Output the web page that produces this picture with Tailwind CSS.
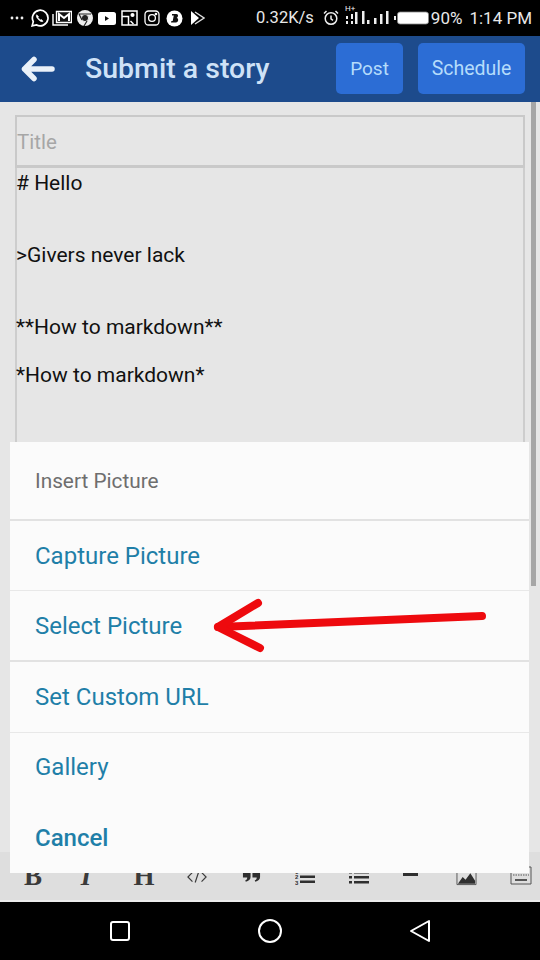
<!DOCTYPE html>
<html lang="en">
<head>
  <meta charset="UTF-8" />
  <title>Submit a story</title>
  <meta name="viewport" content="width=device-width, initial-scale=1.0" />
  <script src="https://cdn.jsdelivr.net/npm/@tailwindcss/browser@4"></script>
</head>
<body class="bg-black font-['Roboto',sans-serif]">
  <div class="relative w-[540px] h-[960px] overflow-hidden flex flex-col">

    <!-- status bar -->
    <div class="h-[36px] bg-black text-[#e8e8e8] flex items-center pl-[9px] shrink-0">
      <div class="flex items-center shrink-0">
        <svg width="16" height="6" viewBox="0 0 16 6"><g fill="#eee"><circle cx="3" cy="3" r="1.4"/><circle cx="8" cy="3" r="1.4"/><circle cx="13" cy="3" r="1.4"/></g></svg>
        <svg width="19" height="19" viewBox="0 0 18 18" fill="none" stroke="#fff" stroke-width="1.6" class="ml-[5px]"><path d="M2 16l1.100-4A7.400 7.400 0 1 1 6 15z"/><path d="M6.300 5.500c-.8 1 0 3 1.700 4.600s3.400 2.400 4.400 1.500l-1.500-1.600-1 .5-2.300-2.300.5-1z" fill="#fff" stroke-width=".6"/></svg>
        <svg width="20" height="18" viewBox="0 0 20 18" fill="none" stroke="#fff" stroke-width="1.400" class="ml-[3px]"><path d="M4.500 2.500h15v11h-15z" fill="#111"/><path d="M1 5v11h15"/><path d="M7 12V5l5 4 5-4v7" stroke-width="2"/></svg>
        <svg width="18" height="18" viewBox="0 0 18 18" class="ml-[4px]"><circle cx="9" cy="9" r="8" fill="#eee"/><circle cx="9" cy="9" r="3.600" fill="#222" stroke="#eee" stroke-width="1"/><path d="M3 5h12M11 12l-3 5M6 11L3 5" stroke="#222" stroke-width="1.200" fill="none"/></svg>
        <svg width="18" height="14" viewBox="0 0 18 14" class="ml-[4px]"><rect width="18" height="13" y="1" rx="2.500" fill="#fff"/><path d="M7 5l4 2.500L7 10z" fill="#111"/></svg>
        <svg width="17" height="16" viewBox="0 0 17 16" fill="none" stroke="#fff" stroke-width="1.500" class="ml-[5px]"><path d="M1 1h15v14H1z"/><path d="M1 6.500h6.500V15"/><circle cx="11.500" cy="5" r="1.300" fill="#fff"/><path d="M9.500 11l3 3"/></svg>
        <svg width="16" height="16" viewBox="0 0 16 16" fill="none" stroke="#fff" stroke-width="1.300" class="ml-[6px]"><rect x="1" y="1" width="14" height="14" rx="3.500"/><circle cx="8" cy="8" r="3.400"/><circle cx="12" cy="4" r=".7" fill="#fff"/></svg>
        <svg width="17" height="17" viewBox="0 0 17 17" class="ml-[6px]"><circle cx="8.500" cy="8.500" r="8" fill="#fff"/><path d="M6 4h4.500c2 0 2 3 .2 3.800 2.300.7 1.800 4.700-.7 4.700H5l.4-1.500H6.700L7.800 5.500H6z" fill="#111"/></svg>
        <svg width="15" height="16" viewBox="0 0 15 16" class="ml-[7px]"><path d="M1 1l8 7-8 7z" fill="#fff"/><path d="M5 2l9 6-9 6" fill="none" stroke="#ddd" stroke-width="1.400"/></svg>
      </div>
      <span class="ml-[51px] text-[16.500px] leading-none whitespace-nowrap shrink-0">0.32K/s</span>
      <svg width="16" height="16" viewBox="0 0 16 16" fill="none" stroke="#eee" stroke-width="1.500" class="ml-[9px] shrink-0"><circle cx="8" cy="8.500" r="5.800"/><path d="M8 5.500v3.300l2 1.500M1 3.500L3.500 1M15 3.500L12.500 1"/></svg>
      <svg width="44" height="22" viewBox="0 0 44 22" class="ml-[6px] -mt-[4px] shrink-0" fill="#eee"><text x="0" y="6" font-size="8" font-family="Roboto" fill="#eee">H+</text><rect x="1" y="16" width="2" height="3"/><rect x="1" y="11" width="2" height="3"/><rect x="6" y="16" width="2" height="3"/><rect x="6" y="9" width="2" height="5"/><rect x="10" y="7" width="2.500" height="12"/><rect x="17" y="6" width="2.500" height="13"/><rect x="22" y="15" width="2.500" height="4"/><rect x="29" y="13" width="2.500" height="6"/><rect x="35" y="9" width="2.500" height="10"/><rect x="41" y="6" width="2.500" height="13"/></svg>
      <svg width="35" height="14" viewBox="0 0 35 14" class="ml-[5px] shrink-0"><rect x="0" y="5" width="2" height="4" fill="#eee"/><rect x="3.500" y="1" width="31" height="12" rx="2.500" fill="#fff" stroke="#888" stroke-width=".8"/></svg>
      <span class="ml-[2px] text-[17px] leading-none whitespace-nowrap shrink-0">90%</span>
      <span class="ml-[7px] text-[17px] leading-none whitespace-nowrap shrink-0">1:14 PM</span>
    </div>

    <!-- header -->
    <div class="h-[66px] bg-[#1d4b8c] flex items-center shrink-0 pl-[21px] pr-[15px]">
      <svg width="34" height="26" viewBox="0 0 34 26" fill="none" stroke="#eaf1f9" stroke-width="5.500" stroke-linecap="round" stroke-linejoin="round"><path d="M3.500 13h27.500M13 3.500L3.500 13l9.500 9.500"/></svg>
      <h1 class="ml-[30px] text-[28.500px] font-medium text-[#cfe2f7] leading-none">Submit a story</h1>
      <button class="ml-auto w-[67px] h-[51px] rounded-[5px] bg-[#2c6dd5] text-[#b5dcfb] text-[19px] -mt-[2px] pt-[2px]">Post</button>
      <button class="ml-[15px] w-[107px] h-[51px] rounded-[5px] bg-[#2c6dd5] text-[#b5dcfb] text-[19.500px] -mt-[2px] pt-[2px]">Schedule</button>
    </div>

    <!-- editor -->
    <div class="flex-1 bg-[#e6e6e6] flex flex-col min-h-0 pl-[15px] pt-[13px]">
      <div class="h-[53px] border-2 border-b-[3px] border-[#c9c9c9] flex items-center pt-[2px] text-[20.500px] text-[#a6a6a6] shrink-0 w-[510px]">Title</div>
      <div class="flex-1 border-x-2 border-[#cdcdcd] text-[21px] text-[#111] leading-[24px] pt-[3px] w-[510px]">
        <p class="-ml-px"># Hello</p>
        <p class="-ml-px mt-[48px]">&gt;Givers never lack</p>
        <p class="-ml-px mt-[48px]">**How to markdown**</p>
        <p class="-ml-px mt-[24px]">*How to markdown*</p>
      </div>
    </div>

    <!-- editor toolbar -->
    <div class="h-[50px] bg-[#dedede] border-b-2 border-[#ececec] shrink-0 text-[#3a3a3a]">
      <div class="flex items-center h-[48px] pl-[6px] *:shrink-0">
        <span class="w-[54px] text-center font-['Liberation_Serif'] font-bold text-[27px] leading-none">B</span>
        <span class="w-[54px] text-center font-['Liberation_Serif'] font-bold italic text-[27px] leading-none -ml-px">I</span>
        <span class="w-[54px] text-center font-['Liberation_Serif'] font-bold text-[27px] leading-none pl-[8px]">H</span>
        <div class="w-[54px] flex justify-center ml-[3px] mt-[2px]"><svg width="20" height="14" viewBox="0 0 22 14" fill="none" stroke="#3a3a3a" stroke-width="1.300"><path d="M6 2L1 7l5 5M16 2l5 5-5 5M13 1L9 13"/></svg></div>
        <div class="w-[54px] flex justify-center"><svg width="19" height="14" viewBox="0 0 20 14" fill="#2f2f2f"><path d="M1 2h8v6c0 3-2 4-5 5l-.6-1.500C5 11 5.500 10 5.500 8.500H1zM11 2h8v6c0 3-2 4-5 5l-.6-1.500C15 11 15.500 10 15.500 8.500H11z"/></svg></div>
        <div class="w-[54px] flex justify-center"><svg width="20" height="17" viewBox="0 0 20 16" fill="#2f2f2f"><text x="0" y="5" font-size="6" font-weight="700" font-family="Liberation Sans">1</text><text x="0" y="10" font-size="6" font-weight="700" font-family="Liberation Sans">2</text><text x="0" y="16" font-size="6" font-weight="700" font-family="Liberation Sans">3</text><rect x="5" y="2" width="15" height="2.500"/><rect x="5" y="7" width="15" height="2.500"/><rect x="5" y="12" width="15" height="2.500"/></svg></div>
        <div class="w-[54px] flex justify-center"><svg width="20" height="15" viewBox="0 0 20 15" fill="#2f2f2f"><rect y="2" width="3" height="2.500"/><rect x="5" y="2" width="15" height="2.500"/><rect y="7" width="3" height="2.500"/><rect x="5" y="7" width="15" height="2.500"/><rect y="12" width="3" height="2.500"/><rect x="5" y="12" width="15" height="2.500"/></svg></div>
        <div class="w-[54px] flex justify-center -ml-[3px]"><div class="w-[15px] h-[2.500px] bg-[#2f2f2f] -mt-[3px]"></div></div>
        <div class="w-[54px] flex justify-center pl-[5px]"><svg width="21" height="20" viewBox="0 0 22 20" fill="#2f2f2f"><path d="M1 1h20v18H1z" fill="none" stroke="#555" stroke-width="1"/><path d="M2 18l5-7 3 3 5-7 5 8v3z"/></svg></div>
        <div class="w-[54px] flex justify-center pl-[6px]"><svg width="22" height="20" viewBox="0 0 22 20" fill="none" stroke="#555" stroke-width="1"><path d="M1 1h20v17H1z"/><path d="M3 5h16M3 9h16" stroke-dasharray="1.500 1"/><path d="M5 14h12" stroke-width="2"/></svg></div>
      </div>
    </div>

    <!-- android nav -->
    <div class="h-[58px] bg-black flex items-center shrink-0">
      <div class="w-[20px] h-[20px] ml-[110px] border-2 border-white rounded-[3px]"></div>
      <div class="w-[24px] h-[24px] ml-[128px] border-2 border-white rounded-full"></div>
      <svg width="22" height="24" viewBox="0 0 22 24" fill="none" stroke="#fff" stroke-width="2" stroke-linejoin="round" class="ml-[127px]"><path d="M20 2v20L2 12z"/></svg>
    </div>

    <!-- scrollbar -->
    <div class="absolute left-[531px] top-[102px] w-[5px] h-[484px] bg-[#a6a6a6]"></div>

    <!-- dialog -->
    <div class="absolute left-[10px] top-[442px] w-[519px] h-[431px] bg-[#fbfbfb] text-[24px] text-[#1f7fa8] flex flex-col">
      <div class="h-[79px] flex items-center pl-[25px] pt-[2px] text-[20.800px] text-[#6e6e6e] border-b-2 border-[#e2e2e2]">Insert Picture</div>
      <div class="h-[70px] flex items-center pl-[25px] pt-[1px] border-b border-[#e8e8e8]">Capture Picture</div>
      <div class="h-[71px] flex items-center pl-[25px] pt-[1px] border-b-2 border-[#e2e2e2]">Select Picture</div>
      <div class="h-[71px] flex items-center pl-[25px] border-b border-[#e8e8e8]">Set Custom URL</div>
      <div class="h-[70px] flex items-center pl-[25px] pb-[2px]">Gallery</div>
      <div class="h-[70px] flex items-center pl-[25px] font-medium">Cancel</div>
    </div>

    <!-- red annotation arrow -->
    <svg class="absolute left-[210px] top-[592px]" width="285" height="66" viewBox="0 0 285 66" fill="none" stroke="#ee0a0e" stroke-width="8" stroke-linecap="round" stroke-linejoin="round">
      <path d="M8 35L272 24"/>
      <path d="M48 11L8 35l42 21"/>
    </svg>
  </div>
</body>
</html>
